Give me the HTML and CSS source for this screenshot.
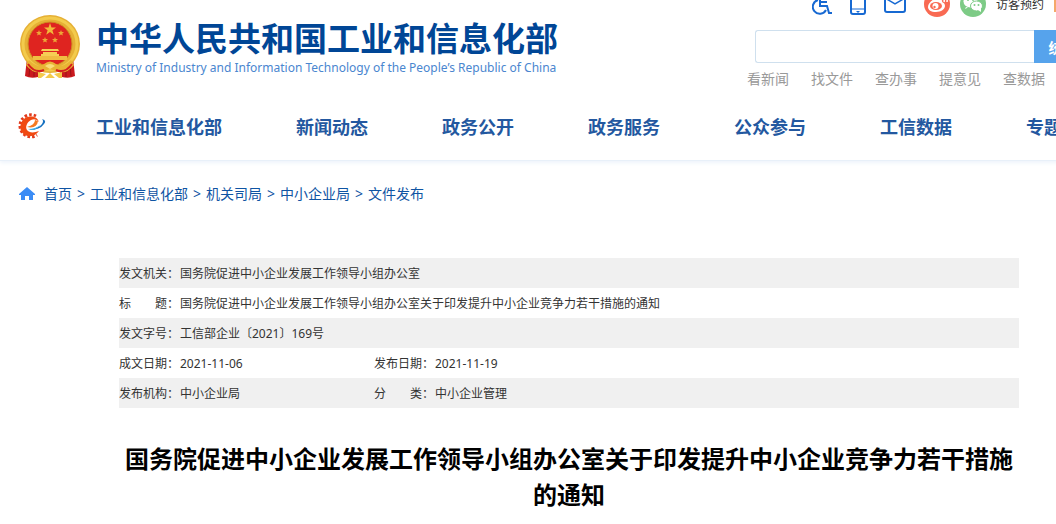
FILE: index.html
```html
<!DOCTYPE html>
<html lang="zh-CN">
<head>
  <meta charset="utf-8">
  <title>中华人民共和国工业和信息化部</title>
  <link rel="stylesheet" href="styles.css">
</head>
<body>
  <!-- 页头 -->
  <header class="header">
    <div class="wrap header-top">
      <a class="logo" href="#">
        <svg class="emblem" viewBox="0 0 62 66" aria-hidden="true">
          <path d="M8 44L6 62q6 3 13 1l2-5h20l2 5q7 2 13-1l-2-18z" fill="#c9191e"/>
          <path d="M11 52l-1 10M15 55v8M47 55v8M51 52l1 10" stroke="#9a1216" fill="none"/>
          <ellipse cx="31" cy="30" rx="30" ry="29" fill="#e6b035"/>
          <ellipse cx="31" cy="30" rx="27" ry="26" fill="none" stroke="#f3cb4c" stroke-width="3"/>
          <circle cx="31" cy="30" r="22" fill="#df2420" stroke="#cf8f22"/>
          <path d="M31 9l1.500 4.500h4.500l-3.600 2.800 1.400 4.500-3.800-2.700-3.800 2.700 1.400-4.500-3.600-2.800h4.500z" fill="#f2b93a"/>
          <g fill="#eda737">
            <path id="star" d="M20 16l.8 2h2.200l-1.700 1.400.6 2.200-1.900-1.200-1.900 1.200.6-2.200-1.700-1.400h2.200z"/>
            <use href="#star" x="22"/>
            <use href="#star" x="6" y="7"/>
            <use href="#star" x="16" y="7"/>
          </g>
          <path d="M23 35h16l1 2H22zM24 38h14v2H24zM22 40h18v3H22z" fill="#f6cf55"/>
          <path d="M14 42h34v4H14z" fill="#f0bd42"/>
          <path d="M10 46q9 9 15 4 6-5 12 0 6 5 15-4l3 5q-7 9-15 7l-9-3-9 3q-8 2-15-7z" fill="#e9b435"/>
          <path d="M26 52q5-4 10 0l-5 3z" fill="#f9de7a"/>
          <path d="M9 50q7 10 16 6M53 50q-7 10-16 6" fill="none" stroke="#d61f1f" stroke-width="2"/>
          <path d="M19 58l8 2-5 4h-3zM43 58l-8 2 5 4h3zM26 64l5-5 5 5z" fill="#f3c94b"/>
        </svg>
        <span class="logo-text">
          <span class="logo-cn">中华人民共和国工业和信息化部</span>
          <span class="logo-en">Ministry of Industry and Information Technology of the People’s Republic of China</span>
        </span>
      </a>

      <div class="header-side">
        <div class="tools">
          <a class="tool" href="#" aria-label="无障碍">
            <svg width="20" height="18" viewBox="0 0 20 18" fill="none" stroke="#1769d2" stroke-width="2">
              <path d="M6 0A7 7 0 1 0 14 10"/>
              <path d="M8-2v8h7l2 7h3"/>
              <path d="M8 2h7"/>
            </svg>
          </a>
          <a class="tool" href="#" aria-label="手机版">
            <svg width="16" height="18" viewBox="0 0 16 18" fill="none" stroke="#1769d2" stroke-width="2">
              <rect x="1" y="-8" width="14" height="22" rx="2"/>
              <path d="M1 9h14" stroke-width="1"/>
              <path d="M6 11h4l-2 2z" fill="#1769d2" stroke="none"/>
            </svg>
          </a>
          <a class="tool" href="#" aria-label="邮箱">
            <svg width="22" height="18" viewBox="0 0 22 18" fill="none" stroke="#1769d2" stroke-width="2">
              <rect x="1" y="-6" width="20" height="18" rx="2"/>
              <path d="M1-2l10 6 10-6" stroke-width="1.500"/>
            </svg>
          </a>
          <a href="#" aria-label="微博">
            <svg width="26" height="18" viewBox="0 0 26 18">
              <circle cx="13" cy="4" r="13" fill="#f96a53"/>
              <path d="M10-1q3-2 4 1 5-1 4 2 3 1 3 4c0 3-4 6-9 6s-8-2-8-5 3-6 6-8z" fill="#fff"/>
              <ellipse cx="12" cy="6" rx="6" ry="4" fill="#f96a53"/>
              <circle cx="11.500" cy="6" r="3" fill="#fff"/>
              <circle cx="10.500" cy="7" r="1.200" fill="#f96a53"/>
              <path d="M18-1q3 0 2 3M18-4q6 0 5 6" fill="none" stroke="#fff" stroke-width="1.500"/>
            </svg>
          </a>
          <a href="#" aria-label="微信">
            <svg width="26" height="18" viewBox="0 0 26 18">
              <circle cx="13" cy="4" r="13" fill="#7dcb86"/>
              <path d="M6 7l-1 2 3-1.500z" fill="#fff"/>
              <ellipse cx="10.500" cy="1.500" rx="7" ry="6" fill="#fff"/>
              <ellipse cx="16.500" cy="6" rx="6" ry="5" fill="#fff" stroke="#7dcb86"/>
              <path d="M18 10l3 2v-4z" fill="#fff"/>
              <g fill="#7dcb86">
                <circle cx="8" cy="0" r="1"/>
                <circle cx="13" cy="0" r="1"/>
                <circle cx="14.500" cy="5" r="1"/>
                <circle cx="18.500" cy="5" r="1"/>
              </g>
            </svg>
          </a>
          <a class="visit" href="#">访客预约</a>
          <a class="tag" href="#" aria-label="更多"></a>
        </div>
        <form class="search">
          <input class="search-input" type="text" aria-label="搜索">
          <button class="search-button" type="button">统一搜索</button>
        </form>
        <div class="quick">
          <a href="#">看新闻</a>
          <a href="#">找文件</a>
          <a href="#">查办事</a>
          <a href="#">提意见</a>
          <a href="#">查数据</a>
        </div>
      </div>
    </div>

    <!-- 主导航 -->
    <nav class="wrap nav">
      <svg class="nav-logo" viewBox="0 0 30 26" aria-hidden="true">
        <path d="M20 3A11 11 0 1 0 21 22" fill="none" stroke="#e23a1c" stroke-width="3" stroke-dasharray="2.500 2"/>
        <path d="M23 9C21 3 13 2 8 6s-5 13 1 16 11 0 14-4c-5 2-10 2-12-1s0-8 4-10q5-2 8 2z" fill="#f04a12"/>
        <path d="M11 14q10 2 11-6l-3-1q0 5-8 7z" fill="#f47a20"/>
        <path d="M26 6q5 1 2 5-4 6-15 6 10-2 13-6 2-3 0-5z" fill="#1470c0"/>
        <path d="M12 16q8 0 12-4-3 5-9 5z" fill="#3ab0e8"/>
      </svg>
      <a href="#">工业和信息化部</a>
      <a href="#">新闻动态</a>
      <a href="#">政务公开</a>
      <a href="#">政务服务</a>
      <a href="#">公众参与</a>
      <a href="#">工信数据</a>
      <a href="#">专题专栏</a>
    </nav>
  </header>

  <main class="wrap">
    <!-- 当前位置 -->
    <div class="crumbs">
      <svg class="home" viewBox="0 0 16 14" aria-hidden="true">
        <path d="M8 0l8 7v1h-2v5h-4V9H6v4H2V8H0V7z" fill="#3b8cf5"/>
      </svg>
      <a href="#">首页</a>
      <span>&gt;</span>
      <a href="#">工业和信息化部</a>
      <span>&gt;</span>
      <a href="#">机关司局</a>
      <span>&gt;</span>
      <a href="#">中小企业局</a>
      <span>&gt;</span>
      <a href="#">文件发布</a>
    </div>

    <article class="article">
      <table class="info">
        <tr>
          <th>发文机关：</th>
          <td colspan="3">国务院促进中小企业发展工作领导小组办公室</td>
        </tr>
        <tr>
          <th>标　　题：</th>
          <td colspan="3">国务院促进中小企业发展工作领导小组办公室关于印发提升中小企业竞争力若干措施的通知</td>
        </tr>
        <tr>
          <th>发文字号：</th>
          <td colspan="3">工信部企业〔2021〕169号</td>
        </tr>
        <tr>
          <th>成文日期：</th>
          <td class="short">2021-11-06</td>
          <th>发布日期：</th>
          <td>2021-11-19</td>
        </tr>
        <tr>
          <th>发布机构：</th>
          <td class="short">中小企业局</td>
          <th>分　　类：</th>
          <td>中小企业管理</td>
        </tr>
      </table>
      <h1>国务院促进中小企业发展工作领导小组办公室关于印发提升中小企业竞争力若干措施的通知</h1>
    </article>
  </main>
</body>
</html>
```
FILE: styles.css
```css
/* 公共样式 */
body {
  margin: 0;
  overflow-x: hidden;
  background: #fff;
  color: #333;
  font-family: "Noto Sans", "Noto Sans CJK SC", sans-serif;
  font-size: 12px;
}

a {
  color: inherit;
  text-decoration: none;
}

svg {
  display: block;
}

.wrap {
  min-width: 1100px;
  max-width: 1100px;
  margin: 0 auto 0 19px;
}

/* 页头 */
.header {
  min-width: 1138px;
  border-bottom: 1px solid #e8f0f9;
  box-shadow: 0 2px 4px #eef4fb;
}

.header-top {
  display: flex;
  justify-content: space-between;
  height: 94px;
}

.logo {
  display: flex;
  gap: 15px;
  padding-top: 14px;
}

.emblem {
  width: 62px;
  height: 66px;
}

.logo-text {
  display: flex;
  flex-direction: column;
  white-space: nowrap;
}

.logo-cn {
  font-family: "Noto Sans CJK SC", sans-serif;
  font-size: 33px;
  font-weight: bold;
  line-height: 46px;
  color: #004696;
}

.logo-en {
  font-size: 12px;
  line-height: 16px;
  color: #4a86cf;
}

.header-side {
  width: 372px;
}

/* 右上角工具 */
.tools {
  display: flex;
  gap: 10px;
  height: 18px;
  padding-left: 65px;
}

.tool {
  margin-right: 8px;
}

.visit {
  line-height: 10px;
}

.tag {
  width: 48px;
  height: 12px;
  background: #f5a86a;
}

/* 搜索框 */
.search {
  display: flex;
  height: 33px;
  margin: 12px 0 0 8px;
}

.search-input {
  box-sizing: border-box;
  flex: 1;
  min-width: 0;
  padding: 0 8px;
  border: 1px solid #cfe0ee;
  border-right: 0;
  border-radius: 3px 0 0 3px;
}

.search-button {
  width: 85px;
  padding: 0;
  border: 0;
  background: #56a3ec;
  color: #fff;
  font-family: inherit;
  font-size: 14px;
  font-weight: bold;
}

.quick {
  display: flex;
  gap: 22px;
  margin-top: 6px;
  font-size: 14px;
  line-height: 20px;
  color: #999;
}

/* 主导航 */
.nav {
  display: flex;
  align-items: center;
  gap: 74px;
  height: 64px;
  padding-bottom: 2px;
  font-size: 18px;
  font-weight: bold;
  color: #2358a0;
  white-space: nowrap;
}

.nav-logo {
  width: 30px;
  height: 26px;
  margin: 0 -24px 0 -3px;
}

/* 当前位置 */
.crumbs {
  display: flex;
  align-items: center;
  gap: 5px;
  padding-top: 22px;
  font-size: 14px;
  line-height: 22px;
  color: #0f54a3;
}

.home {
  width: 16px;
  height: 14px;
  margin-right: 4px;
}

/* 文件信息 */
.article {
  width: 900px;
  margin: 53px auto 0;
}

.info {
  width: 100%;
  border-collapse: collapse;
}

.info th,
.info td {
  height: 28px;
  padding: 2px 0 0;
  line-height: 20px;
  text-align: left;
}

.info th {
  width: 61px;
  font-weight: normal;
}

.info .short {
  width: 194px;
}

.info tr:nth-child(odd) {
  background: #f0f0f0;
}

h1 {
  margin: 33px 0 0;
  font-size: 24px;
  line-height: 36px;
  text-align: center;
  color: #000;
}
```
